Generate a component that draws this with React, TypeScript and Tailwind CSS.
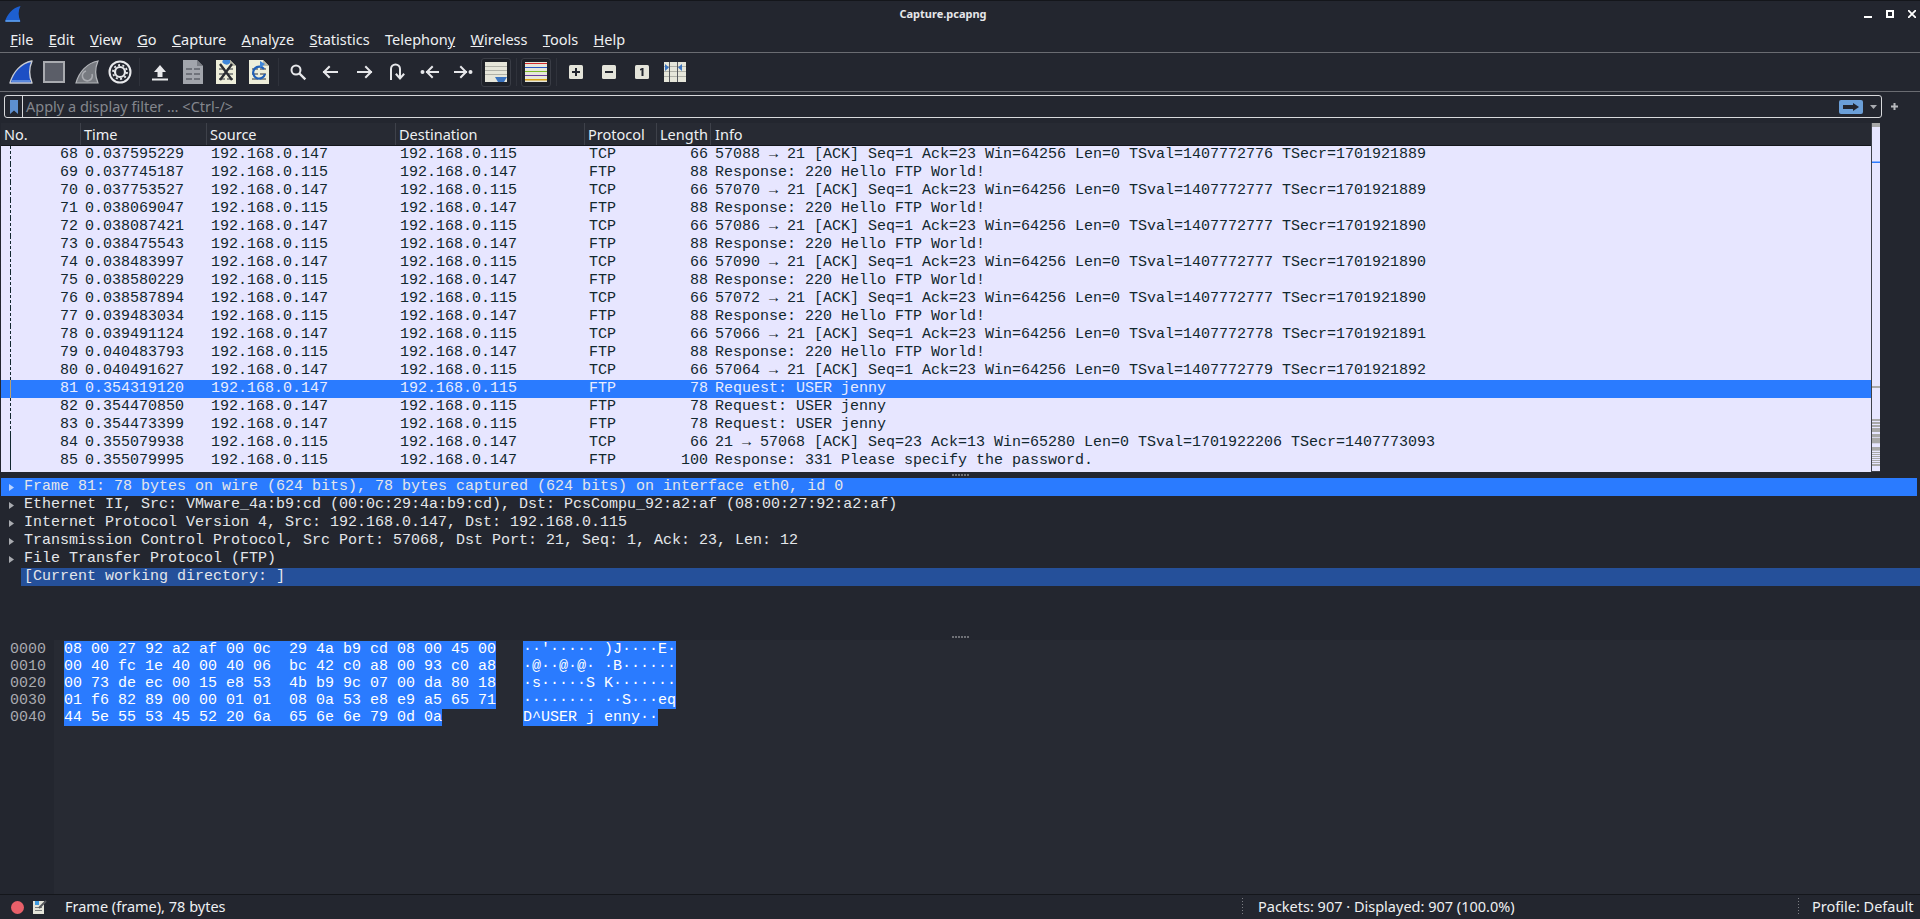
import React from "react";

const menus: [string, string, string][] = [
  ["", "F", "ile"], ["", "E", "dit"], ["", "V", "iew"], ["", "G", "o"], ["", "C", "apture"], ["", "A", "nalyze"],
  ["", "S", "tatistics"], ["Telephon", "y", ""], ["", "W", "ireless"], ["", "T", "ools"], ["", "H", "elp"],
];

const a = "192.168.0.147";
const b = "192.168.0.115";
const ack = (p: number, v: number, e: number) =>
  `${p} → 21 [ACK] Seq=1 Ack=23 Win=64256 Len=0 TSval=140777${v} TSecr=170192${e}`;
const hello = "Response: 220 Hello FTP World!";
type Row = [number, string, string, string, string, number, string];
const rows: Row[] = [
  [68, "0.037595229", a, b, "TCP", 66, ack(57088, 2776, 1889)],
  [69, "0.037745187", b, a, "FTP", 88, hello],
  [70, "0.037753527", a, b, "TCP", 66, ack(57070, 2777, 1889)],
  [71, "0.038069047", b, a, "FTP", 88, hello],
  [72, "0.038087421", a, b, "TCP", 66, ack(57086, 2777, 1890)],
  [73, "0.038475543", b, a, "FTP", 88, hello],
  [74, "0.038483997", a, b, "TCP", 66, ack(57090, 2777, 1890)],
  [75, "0.038580229", b, a, "FTP", 88, hello],
  [76, "0.038587894", a, b, "TCP", 66, ack(57072, 2777, 1890)],
  [77, "0.039483034", b, a, "FTP", 88, hello],
  [78, "0.039491124", a, b, "TCP", 66, ack(57066, 2778, 1891)],
  [79, "0.040483793", b, a, "FTP", 88, hello],
  [80, "0.040491627", a, b, "TCP", 66, ack(57064, 2779, 1892)],
  [81, "0.354319120", a, b, "FTP", 78, "Request: USER jenny"],
  [82, "0.354470850", a, b, "FTP", 78, "Request: USER jenny"],
  [83, "0.354473399", a, b, "FTP", 78, "Request: USER jenny"],
  [84, "0.355079938", b, a, "TCP", 66, "21 → 57068 [ACK] Seq=23 Ack=13 Win=65280 Len=0 TSval=1701922206 TSecr=1407773093"],
  [85, "0.355079995", b, a, "FTP", 100, "Response: 331 Please specify the password."],
];

const details = [
  "Frame 81: 78 bytes on wire (624 bits), 78 bytes captured (624 bits) on interface eth0, id 0",
  "Ethernet II, Src: VMware_4a:b9:cd (00:0c:29:4a:b9:cd), Dst: PcsCompu_92:a2:af (08:00:27:92:a2:af)",
  "Internet Protocol Version 4, Src: 192.168.0.147, Dst: 192.168.0.115",
  "Transmission Control Protocol, Src Port: 57068, Dst Port: 21, Seq: 1, Ack: 23, Len: 12",
  "File Transfer Protocol (FTP)",
];

const hex: [string, string, string][] = [
  ["0000", "08 00 27 92 a2 af 00 0c  29 4a b9 cd 08 00 45 00", "··'····· )J····E·"],
  ["0010", "00 40 fc 1e 40 00 40 06  bc 42 c0 a8 00 93 c0 a8", "·@··@·@· ·B······"],
  ["0020", "00 73 de ec 00 15 e8 53  4b b9 9c 07 00 da 80 18", "·s·····S K·······"],
  ["0030", "01 f6 82 89 00 00 01 01  08 0a 53 e8 e9 a5 65 71", "········ ··S···eq"],
  ["0040", "44 5e 55 53 45 52 20 6a  65 6e 6e 79 0d 0a", "D^USER j enny··"],
];

const scrollTicks: [number, number][] = [
  [59, 61], [62, 64], [65, 67], [68, 72], [74, 77.3], [78, 83.3], [87, 90.7], [92, 93], [94, 95], [96, 97], [98, 99], [100, 101], [102, 103], [104, 106],
];

const Doc = ({ children }: { children?: React.ReactNode }) => (
  <svg width="22" height="24" viewBox="0 0 22 24">
    <path d="M1 0 H15 L21 6 V24 H1 Z" fill="#eeeeda" />
    <path d="M15 0 V6 H21" fill="#b9b9a8" />
    <g fill="#8d8f8a">
      <rect x="4" y="8" width="6" height="2" /><rect x="12" y="8" width="6" height="2" />
      <rect x="4" y="13" width="6" height="2" /><rect x="12" y="13" width="6" height="2" />
      <rect x="4" y="18" width="6" height="2" /><rect x="12" y="18" width="6" height="2" />
    </g>
    {children}
  </svg>
);

const Stroke = ({ children }: { children: React.ReactNode }) => (
  <svg width="20" height="20" viewBox="0 0 20 20" fill="none" stroke="#e6e7ea" strokeWidth="2" strokeLinecap="square">
    {children}
  </svg>
);

const Btn = ({ children }: { children: React.ReactNode }) => (
  <div className="w-[33px] h-full flex items-center justify-center shrink-0">{children}</div>
);

const Sep = ({ w }: { w: string }) => (
  <div className={`${w} h-[28px] flex justify-center shrink-0`}>
    <div className="w-px h-full bg-[#2f323b]" />
  </div>
);

const Zoom = ({ children }: { children: React.ReactNode }) => (
  <svg width="14" height="14" viewBox="0 0 14 14">
    <rect x="0" y="0" width="14" height="14" rx="1.5" fill="#e4e4da" />
    <g fill="#23262f">{children}</g>
  </svg>
);

const Toggle = ({ children }: { children: React.ReactNode }) => (
  <div className="w-[30px] h-[29px] mx-[2px] flex items-center justify-center shrink-0 bg-[#1e2128] border border-[#3a3d46] rounded-[3px]">
    {children}
  </div>
);

const Toolbar = () => (
  <div className="h-[39px] flex items-center pl-[4px] border-b border-[#6a6c72] shrink-0">
    <Btn>
      <svg width="24" height="24" viewBox="0 0 24 24">
        <path d="M1 23 C4 12 12 3 23 1 C20 8 20 16 23 23 Z" fill="#1d4fc4" stroke="#c9ccd2" strokeWidth="1.4" strokeLinejoin="round" />
        <path d="M3 21 L21 21" stroke="#6f9be6" strokeWidth="1.5" />
      </svg>
    </Btn>
    <Btn>
      <div className="w-[22px] h-[22px] bg-[#5b5e68] border-2 border-[#a9abb0]" />
    </Btn>
    <Btn>
      <svg width="24" height="24" viewBox="0 0 24 24">
        <path d="M1 23 C4 12 12 3 23 1 C20 8 20 16 23 23 Z" fill="#777a80" stroke="#b4b6ba" strokeWidth="1.2" />
        <path d="M11 11 A5 5 0 1 0 17 14" fill="none" stroke="#a9abb0" strokeWidth="1.6" />
      </svg>
    </Btn>
    <Btn>
      <svg width="24" height="24" viewBox="0 0 24 24" fill="none">
        <circle cx="12" cy="12" r="10.5" stroke="#e8e9ec" strokeWidth="2" />
        <circle cx="12" cy="12" r="5" stroke="#e8e9ec" strokeWidth="2.2" />
        <circle cx="12" cy="12" r="7" stroke="#e8e9ec" strokeWidth="1.8" strokeDasharray="2 2.4" />
      </svg>
    </Btn>
    <Sep w="w-[7px]" />
    <Btn>
      <svg width="18" height="18" viewBox="0 0 18 18">
        <path d="M9 2 L15 9 H11.5 V14 H6.5 V9 H3 Z" fill="#e8e9ec" />
        <rect x="1" y="15.5" width="16" height="2" fill="#e8e9ec" />
      </svg>
    </Btn>
    <Btn>
      <svg width="20" height="24" viewBox="0 0 20 24">
        <path d="M0 0 H14 L20 6 V24 H0 Z" fill="#a2a5ac" />
        <path d="M14 0 V6 H20" fill="#7a7d84" />
        <g fill="#6f727a">
          <rect x="3" y="8" width="6" height="2" /><rect x="11" y="8" width="6" height="2" />
          <rect x="3" y="13" width="6" height="2" /><rect x="11" y="13" width="6" height="2" />
          <rect x="3" y="18" width="6" height="2" /><rect x="11" y="18" width="6" height="2" />
        </g>
      </svg>
    </Btn>
    <Btn>
      <Doc>
        <path d="M5 4 L17 20 M17 4 L5 20" stroke="#2b2d33" strokeWidth="2.4" />
        <path d="M8 0 A4 3 0 0 0 15 3 L15 0 Z" fill="#3f86d8" />
      </Doc>
    </Btn>
    <Btn>
      <Doc>
        <path d="M16 9 A6 6 0 1 0 17 14" fill="none" stroke="#1f5fb8" strokeWidth="2.2" />
        <path d="M12 1 L17 4 L12 8 Z" fill="#3f86d8" />
      </Doc>
    </Btn>
    <Sep w="w-[6px]" />
    <Btn>
      <Stroke><circle cx="8" cy="8" r="4.5" /><path d="M12 12 L16.5 16.5" strokeWidth="2.4" /></Stroke>
    </Btn>
    <Btn>
      <Stroke><path d="M3 10 H16 M8 5 L3 10 L8 15" /></Stroke>
    </Btn>
    <Btn>
      <Stroke><path d="M4 10 H17 M12 5 L17 10 L12 15" /></Stroke>
    </Btn>
    <Btn>
      <Stroke><path d="M4 17 V7 A4.5 4.5 0 0 1 13 7 V16 M9.5 12.5 L13 16.5 L16.5 12.5" /></Stroke>
    </Btn>
    <Btn>
      <Stroke><circle cx="2.5" cy="10" r="1" /><path d="M7 10 H18 M12 5 L7 10 L12 15" /></Stroke>
    </Btn>
    <Btn>
      <Stroke><circle cx="17.5" cy="10" r="1" /><path d="M2 10 H13 M8 5 L13 10 L8 15" /></Stroke>
    </Btn>
    <Toggle>
      <svg width="22" height="20" viewBox="0 0 22 20">
        <rect width="22" height="20" fill="#e6e6da" />
        <g fill="#b0b1a8"><rect y="4" width="22" height="1" /><rect y="8" width="22" height="1" /><rect y="12" width="22" height="1" /></g>
        <path d="M10 15 H22 L19 20 H13 Z" fill="#3b74c0" />
      </svg>
    </Toggle>
    <Sep w="w-[6px]" />
    <Toggle>
      <svg width="22" height="20" viewBox="0 0 22 20">
        <rect width="22" height="20" fill="#e6e6da" />
        <rect y="1" width="22" height="1" fill="#d42b2b" />
        <rect y="5" width="22" height="1" fill="#2a55c4" />
        <rect y="9" width="22" height="1" fill="#7dbb2a" />
        <rect y="13" width="22" height="1" fill="#6a3aa0" />
        <rect y="17" width="22" height="1.5" fill="#d8a010" />
      </svg>
    </Toggle>
    <Sep w="w-[6px]" />
    <Btn><Zoom><path d="M6 3 H8 V6 H11 V8 H8 V11 H6 V8 H3 V6 H6 Z" /></Zoom></Btn>
    <Btn><Zoom><rect x="3" y="6" width="8" height="2" /></Zoom></Btn>
    <Btn><Zoom><path d="M5 4 L7 3 H8.5 V11 H6.5 V5 L5 5.6 Z" /></Zoom></Btn>
    <Btn>
      <svg width="22" height="20" viewBox="0 0 22 20">
        <rect width="22" height="20" fill="#e6e6da" />
        <g fill="#b0b1a8"><rect y="4" width="22" height="1" /><rect y="9" width="22" height="1" /><rect y="14" width="22" height="1" /></g>
        <path d="M1 2 L5 5.5 L1 9 Z M18 2 L14 5.5 L18 9 Z" fill="#3b74c0" />
        <rect x="5" y="0" width="1" height="20" fill="#55575c" />
        <rect x="13" y="0" width="1" height="20" fill="#55575c" />
      </svg>
    </Btn>
  </div>
);

const FilterBar = () => (
  <div className="h-[31px] flex items-start pt-[3px] pl-[4px] shrink-0">
    <div className="w-[1878px] h-[23px] border border-[#d8d9dc] rounded-[3px] flex items-center">
      <div className="w-[18px] h-full flex items-center justify-center border-r border-[#d8d9dc] shrink-0">
        <svg width="8" height="14" viewBox="0 0 8 14"><path d="M0 0 H8 V14 L4 10.5 L0 14 Z" fill="#5d8fd0" /></svg>
      </div>
      <div className="flex-1 pl-[3px] text-[14.5px] text-[#83868d] leading-[21px]">Apply a display filter … &lt;Ctrl-/&gt;</div>
      <div className="w-[24px] h-[14px] bg-[#6b9fd8] rounded-[2px] flex items-center justify-center mr-[7px]">
        <svg width="16" height="8" viewBox="0 0 16 8"><path d="M0 2 H10 V0 L16 4 L10 8 V6 H0 Z" fill="#23262f" /></svg>
      </div>
      <svg className="mr-[4px]" width="7" height="4" viewBox="0 0 7 4"><path d="M0 0 H7 L3.5 4 Z" fill="#a9abb0" /></svg>
    </div>
    <svg className="ml-[9px] mt-[8px]" width="7" height="7" viewBox="0 0 7 7"><path d="M2.5 0 H4.5 V2.5 H7 V4.5 H4.5 V7 H2.5 V4.5 H0 V2.5 H2.5 Z" fill="#b8b9bd" /></svg>
  </div>
);

const heads: [string, string][] = [
  ["No.", "w-[80px] pl-[3px]"], ["Time", "w-[126px] pl-[3px]"], ["Source", "w-[189px] pl-[3px]"], ["Destination", "w-[189px] pl-[3px]"],
  ["Protocol", "w-[72px] pl-[3px]"], ["Length", "w-[54px] pl-[3px]"], ["Info", "flex-1 pl-[4px]"],
];

const PacketList = () => (
  <div className="h-[349px] flex shrink-0 pl-px">
    <div className="w-[1870px] flex flex-col shrink-0">
      <div className="h-[23px] flex bg-[#272a33] text-[14.5px] text-[#eef0f2] leading-[22px] border-b border-[#14161b] shrink-0">
        {heads.map(([t, w], i) => (
          <div key={t} className={`${w} ${i === 6 ? "" : "border-r border-[#3e414a]"} pr-[2px] shrink-0 overflow-hidden`}>{t}</div>
        ))}
      </div>
      <div className="flex-1 bg-[#e7e6ff] overflow-hidden font-['Liberation_Mono',monospace] text-[15px] text-[#12272e] leading-[18px] whitespace-pre">
        {rows.map((r) => {
          const sel = r[0] === 81;
          const solid = r[0] >= 84;
          return (
            <div key={r[0]} className={`h-[18px] flex ${sel ? "bg-[#2a7bff] text-[#e8ecff]" : ""}`}>
              <div className="w-[80px] shrink-0 flex justify-between pr-[3px]">
                <div className="w-px h-full ml-[9px]">
                  {sel ? (
                    <div className="w-px h-full bg-[#b8a070]" />
                  ) : solid ? (
                    <div className="w-px h-full bg-[#12272e]" />
                  ) : (
                    <div className="w-px h-full bg-[repeating-linear-gradient(to_bottom,#12272e_0,#12272e_3px,transparent_3px,transparent_5px)]" />
                  )}
                </div>
                <span>{r[0]}</span>
              </div>
              <div className="w-[126px] pl-[4px] shrink-0">{r[1]}</div>
              <div className="w-[189px] pl-[4px] shrink-0">{r[2]}</div>
              <div className="w-[189px] pl-[4px] shrink-0">{r[3]}</div>
              <div className="w-[72px] pl-[4px] shrink-0">{r[4]}</div>
              <div className="w-[51px] text-right shrink-0">{r[5]}</div>
              <div className="pl-[7px] flex-1">{r[6]}</div>
            </div>
          );
        })}
      </div>
    </div>
    <svg className="w-[8px] h-[349px] shrink-0 bg-[#e7e6ff] border-l border-[#3e414a] box-content" viewBox="0 0 8 349">
      <rect x="0" y="0" width="8" height="4" fill="#a8a8a8" />
      <rect x="0" y="38.5" width="8" height="1.5" fill="#2a7bff" />
      <rect x="0" y="263" width="8" height="2" fill="#a8a8a8" />
      {scrollTicks.map(([s, e]) => (
        <rect key={s} x="0" y={237 + s} width="8" height={e - s} fill="#a8a8a8" />
      ))}
      <rect x="0" y="348" width="8" height="1" fill="#3e414a" />
    </svg>
  </div>
);

const Splitter = () => (
  <div className="h-[6px] shrink-0 flex items-center justify-center gap-px">
    {[0, 1, 2, 3, 4, 5].map((i) => (
      <div key={i} className="w-[2px] h-[2px] bg-[#6e7076]" />
    ))}
  </div>
);

const DetailPane = () => (
  <div className="h-[156px] shrink-0 font-['Liberation_Mono',monospace] text-[15px] leading-[18px] text-[#e4e6ea] whitespace-pre overflow-hidden">
    {details.map((d, i) => (
      <div key={d} className={`h-[18px] flex items-center ml-px mr-[3px] ${i === 0 ? "bg-[#2a7bff]" : ""}`}>
        <svg className="ml-[8px] mr-[10px] shrink-0" width="5" height="7" viewBox="0 0 5 7">
          <path d="M0 0 L5 3.5 L0 7 Z" fill={i === 0 ? "#bcd4ff" : "#a9abb0"} />
        </svg>
        <span>{d}</span>
      </div>
    ))}
    <div className="h-[18px] ml-[21px] pl-[3px] bg-[#25509a]">[Current working directory: ]</div>
  </div>
);

const HexPane = () => (
  <div className="flex-1 flex min-h-0 font-['Liberation_Mono',monospace] text-[15px] leading-[17px] whitespace-pre">
    <div className="w-[54px] shrink-0 bg-[#23262f] pl-[10px] pt-[1px] text-[#a9abb0]">
      {hex.map((h) => (
        <div key={h[0]} className="h-[17px]">{h[0]}</div>
      ))}
    </div>
    <div className="flex-1 pl-[10px] pt-[1px] bg-[#272a33] text-white">
      {hex.map((h) => (
        <div key={h[0]} className="h-[17px] flex">
          <div className="w-[459px] shrink-0"><div className="inline-block h-[17px] bg-[#2a7bff]">{h[1]}</div></div>
          <div className="inline-block h-[17px] bg-[#2a7bff]">{h[2]}</div>
        </div>
      ))}
    </div>
  </div>
);

const StatusBar = () => {
  const Dots = () => (
    <div className="w-px h-[18px] bg-[repeating-linear-gradient(to_bottom,#7c7e84_0,#7c7e84_1px,transparent_1px,transparent_3px)] shrink-0" />
  );
  return (
    <div className="h-[25px] shrink-0 border-t border-[#14161b] flex items-center text-[14.5px] text-[#eef0f2]">
      <div className="w-[13px] h-[13px] rounded-full bg-[#e8606a] ml-[11px] shrink-0" />
      <svg className="ml-[9px] shrink-0" width="14" height="14" viewBox="0 0 14 14">
        <rect x="0" y="1" width="11" height="13" fill="#e4e4da" />
        <rect x="2" y="7" width="7" height="1" fill="#77797a" />
        <rect x="2" y="10" width="7" height="1" fill="#77797a" />
        <path d="M2 1 H6 V5 H2 Z" fill="#3f9ae0" />
        <path d="M6 8 L13 1" stroke="#55575c" strokeWidth="2" />
      </svg>
      <div className="ml-[18px] w-[1177px] shrink-0">Frame (frame), 78 bytes</div>
      <Dots />
      <div className="ml-[15px] w-[540px] shrink-0">Packets: 907 · Displayed: 907 (100.0%)</div>
      <Dots />
      <div className="ml-[13px]">Profile: Default</div>
    </div>
  );
};

export default function App() {
  return (
    <div className="w-[1920px] h-[919px] overflow-hidden flex flex-col bg-[#23262f] font-['Noto_Sans',sans-serif]">
      <div className="h-[29px] shrink-0 relative flex items-center justify-center pr-[34px] pb-[2px] border-t border-[#14161b]">
        <svg className="absolute left-[5px] top-[5px]" width="16" height="16" viewBox="0 0 16 16">
          <path d="M0 15.5 C2 9 7 2 15.5 0 C13 5 13 10 15.5 15.5 Z" fill="#1d5fd0" />
          <path d="M0.5 15 H15" stroke="#63a4f0" strokeWidth="1.5" />
        </svg>
        <span className="text-[11px] font-bold text-[#e6e7ea]">Capture.pcapng</span>
        <div className="absolute right-0 top-[9px] flex items-center gap-[14px] pr-[4px]">
          <div className="w-[8px] h-[2px] bg-white mt-[6px]" />
          <div className="w-[8px] h-[8px] border-2 border-white" />
          <svg width="8" height="8" viewBox="0 0 8 8"><path d="M0 0 L8 8 M8 0 L0 8" stroke="white" strokeWidth="1.8" /></svg>
        </div>
      </div>
      <div className="h-[24px] shrink-0 flex items-center pl-[2.5px] pb-[3px] border-b border-[#6a6c72] text-[14.5px] text-[#eef0f2]">
        {menus.map(([pre, u, post]) => (
          <div key={u + post} className="px-[7.7px] leading-[20px]">
            {pre}<span className="underline">{u}</span>{post}
          </div>
        ))}
      </div>
      <Toolbar />
      <FilterBar />
      <PacketList />
      <Splitter />
      <DetailPane />
      <Splitter />
      <HexPane />
      <StatusBar />
    </div>
  );
}
